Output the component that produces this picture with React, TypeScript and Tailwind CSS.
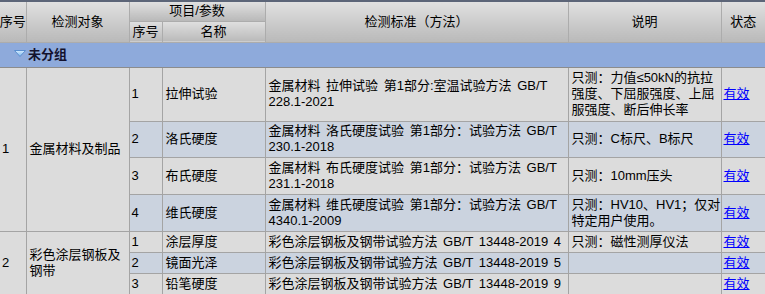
import React from "react";

type Item = {
  no: number;
  name: string;
  standard: string[];
  note: string[];
  h: string;
  alt: boolean;
};

type Group = {
  no: number;
  target: string[];
  items: Item[];
};

const groups: Group[] = [
  {
    no: 1,
    target: ["金属材料及制品"],
    items: [
      {
        no: 1,
        name: "拉伸试验",
        standard: ["金属材料 拉伸试验 第1部分:室温试验方法 GB/T", "228.1-2021"],
        note: ["只测：力值≤50kN的抗拉", "强度、下屈服强度、上屈", "服强度、断后伸长率"],
        h: "h-[54px]",
        alt: false,
      },
      {
        no: 2,
        name: "洛氏硬度",
        standard: ["金属材料 洛氏硬度试验 第1部分：试验方法 GB/T", "230.1-2018"],
        note: ["只测：C标尺、B标尺"],
        h: "h-[36px]",
        alt: true,
      },
      {
        no: 3,
        name: "布氏硬度",
        standard: ["金属材料 布氏硬度试验 第1部分：试验方法 GB/T", "231.1-2018"],
        note: ["只测：10mm压头"],
        h: "h-[37px]",
        alt: false,
      },
      {
        no: 4,
        name: "维氏硬度",
        standard: ["金属材料 维氏硬度试验 第1部分：试验方法 GB/T", "4340.1-2009"],
        note: ["只测：HV10、HV1；仅对", "特定用户使用。"],
        h: "h-[37px]",
        alt: true,
      },
    ],
  },
  {
    no: 2,
    target: ["彩色涂层钢板及", "钢带"],
    items: [
      {
        no: 1,
        name: "涂层厚度",
        standard: ["彩色涂层钢板及钢带试验方法 GB/T 13448-2019 4"],
        note: ["只测：磁性测厚仪法"],
        h: "h-[21px]",
        alt: false,
      },
      {
        no: 2,
        name: "镜面光泽",
        standard: ["彩色涂层钢板及钢带试验方法 GB/T 13448-2019 5"],
        note: [],
        h: "h-[21px]",
        alt: true,
      },
      {
        no: 3,
        name: "铅笔硬度",
        standard: ["彩色涂层钢板及钢带试验方法 GB/T 13448-2019 9"],
        note: [],
        h: "h-[21px]",
        alt: false,
      },
    ],
  },
];

const th =
  "border border-[#acacac] bg-gradient-to-b from-[#e0e0e0] to-[#b9b9b9] font-normal text-center align-middle p-0 whitespace-nowrap";
const td = "border border-[#a4a4a4] px-[2px] py-0 align-middle text-left";

function Lines({ lines }: { lines: string[] }) {
  return (
    <>
      {lines.map((l, i) => (
        <div key={i} className="whitespace-nowrap">
          {l}
        </div>
      ))}
    </>
  );
}

export default function App() {
  return (
    <div
      className="w-[765px] h-[294px] overflow-hidden bg-[#dcdcdc] text-[13px] leading-[16px] text-black"
      style={{ fontFamily: '"Liberation Sans", "Noto Sans CJK SC", sans-serif' }}
    >
      <table className="w-[765px] table-fixed border-collapse border-t-2 border-t-[#5c6578]">
        <colgroup>
          <col className="w-[26px]" />
          <col className="w-[103px]" />
          <col className="w-[33px]" />
          <col className="w-[103px]" />
          <col className="w-[303px]" />
          <col className="w-[153px]" />
          <col className="w-[44px]" />
        </colgroup>
        <thead>
          <tr className="h-[20px]">
            <th rowSpan={2} className={`${th} border-l-0 overflow-visible`}>
              <div className="-mx-[2px]">序号</div>
            </th>
            <th rowSpan={2} className={th}>检测对象</th>
            <th colSpan={2} className={th}>项目/参数</th>
            <th rowSpan={2} className={th}>检测标准（方法）</th>
            <th rowSpan={2} className={th}>说明</th>
            <th rowSpan={2} className={`${th} border-r-0`}>状态</th>
          </tr>
          <tr className="h-[21px]">
            <th className={th}>序号</th>
            <th className={th}>名称</th>
          </tr>
        </thead>
        <tbody>
          <tr className="h-[25px]">
            <td colSpan={7} className="border-b border-b-[#8c8c8c] bg-[#8eaadb] p-0 align-middle">
              <div className="flex items-center pl-[14px] font-bold text-[#14122e]">
                <svg width="12" height="7" viewBox="0 0 12 7" className="mr-[2px] mt-[-3px]">
                  <defs>
                    <linearGradient id="tri" x1="0" y1="0" x2="0" y2="1">
                      <stop offset="0" stopColor="#d4ecff" />
                      <stop offset="1" stopColor="#7db6ea" />
                    </linearGradient>
                  </defs>
                  <polygon points="0.5,0.5 11.5,0.5 6,6.5" fill="url(#tri)" stroke="#5b8fcf" strokeWidth="1" />
                </svg>
                未分组
              </div>
            </td>
          </tr>
          {groups.map((g) =>
            g.items.map((it, idx) => {
              const bg = it.alt ? "bg-[#cbd3df]" : "bg-[#dcdcdc]";
              return (
                <tr key={`${g.no}-${it.no}`} className={it.h}>
                  {idx === 0 && (
                    <>
                      <td rowSpan={g.items.length} className={`${td} border-l-0 bg-[#dcdcdc]`}>
                        {g.no}
                      </td>
                      <td rowSpan={g.items.length} className={`${td} bg-[#dcdcdc] pl-[3px]`}>
                        <Lines lines={g.target} />
                      </td>
                    </>
                  )}
                  <td className={`${td} ${bg}`}>{it.no}</td>
                  <td className={`${td} ${bg} pl-[3px]`}>{it.name}</td>
                  <td className={`${td} ${bg} pl-[3px] [word-spacing:2px]`}>
                    <Lines lines={it.standard} />
                  </td>
                  <td className={`${td} ${bg} pl-[3px]`}>
                    <Lines lines={it.note} />
                  </td>
                  <td className={`${td} ${bg} border-r-0`}>
                    <a href="#" className="text-[#0000ff] underline">
                      有效
                    </a>
                  </td>
                </tr>
              );
            })
          )}
        </tbody>
      </table>
    </div>
  );
}
